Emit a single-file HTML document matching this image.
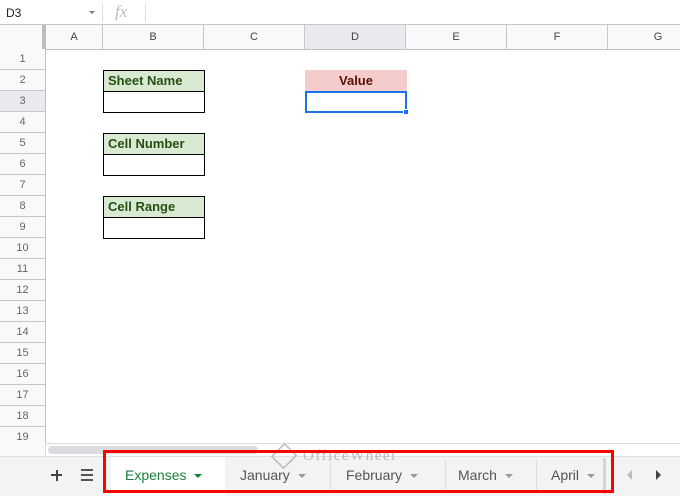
<!DOCTYPE html>
<html><head><style>
*{box-sizing:border-box;margin:0;padding:0}
body{width:680px;height:496px;overflow:hidden;background:#fff;font-family:"Liberation Sans",Arial,sans-serif;position:relative}
.abs{position:absolute}
.fb{left:0;top:0;width:680px;height:25px;border-bottom:1px solid #c7c7c7;background:#fff}
.ch{top:25px;height:25px;background:#f8f9fa;border-bottom:1px solid #c0c0c0;border-right:1px solid #c7c7c7;font-size:11px;color:#444;text-align:center;line-height:24px}
.rh{left:0;width:46px;height:21px;background:#f8f9fa;border-bottom:1px solid #c7c7c7;border-right:1px solid #c0c0c0;font-size:11px;color:#666;text-align:center;line-height:21px}
.cell{border:1px solid #000;font-weight:bold;font-size:13px;padding-left:4px;line-height:19px}
.ar{display:inline-block;width:0;height:0;border-left:4px solid transparent;border-right:4px solid transparent;border-top:4px solid #999;vertical-align:middle;margin-left:8px}
</style></head><body>
<div class="abs fb">
 <div class="abs" style="left:6px;top:6px;font-size:12px;color:#222">D3</div>
 <div class="abs" style="left:89px;top:11px;width:0;height:0;border-left:3px solid transparent;border-right:3px solid transparent;border-top:3px solid #777"></div>
 <div class="abs" style="left:102px;top:3px;width:1px;height:19px;background:#ddd"></div>
 <div class="abs" style="left:115px;top:2px;font-family:'Liberation Serif',serif;font-style:italic;font-size:17px;color:#bbb">fx</div>
 <div class="abs" style="left:145px;top:3px;width:1px;height:19px;background:#ddd"></div>
</div>
<div class="abs ch" style="left:0;width:46px;border-right:4px solid #bdbdbd"></div>
<div class="abs ch" style="left:46px;width:57px">A</div>
<div class="abs ch" style="left:103px;width:101px">B</div>
<div class="abs ch" style="left:204px;width:101px">C</div>
<div class="abs ch" style="left:305px;width:101px;background:#e8eaed">D</div>
<div class="abs ch" style="left:406px;width:101px">E</div>
<div class="abs ch" style="left:507px;width:101px">F</div>
<div class="abs ch" style="left:608px;width:101px">G</div>
<div class="abs rh" style="top:49px">1</div>
<div class="abs rh" style="top:70px">2</div>
<div class="abs rh" style="top:91px;background:#e8eaed">3</div>
<div class="abs rh" style="top:112px">4</div>
<div class="abs rh" style="top:133px">5</div>
<div class="abs rh" style="top:154px">6</div>
<div class="abs rh" style="top:175px">7</div>
<div class="abs rh" style="top:196px">8</div>
<div class="abs rh" style="top:217px">9</div>
<div class="abs rh" style="top:238px">10</div>
<div class="abs rh" style="top:259px">11</div>
<div class="abs rh" style="top:280px">12</div>
<div class="abs rh" style="top:301px">13</div>
<div class="abs rh" style="top:322px">14</div>
<div class="abs rh" style="top:343px">15</div>
<div class="abs rh" style="top:364px">16</div>
<div class="abs rh" style="top:385px">17</div>
<div class="abs rh" style="top:406px">18</div>
<div class="abs rh" style="top:427px">19</div>

<div class="abs cell" style="left:103px;top:70px;width:102px;height:22px;background:#d9ead3;color:#274e13">Sheet Name</div>
<div class="abs cell" style="left:103px;top:91px;width:102px;height:22px"></div>
<div class="abs cell" style="left:103px;top:133px;width:102px;height:22px;background:#d9ead3;color:#274e13">Cell Number</div>
<div class="abs cell" style="left:103px;top:154px;width:102px;height:22px"></div>
<div class="abs cell" style="left:103px;top:196px;width:102px;height:22px;background:#d9ead3;color:#274e13">Cell Range</div>
<div class="abs cell" style="left:103px;top:217px;width:102px;height:22px"></div>
<div class="abs" style="left:305px;top:70px;width:102px;height:21px;background:#f4cccc;color:#5b0f00;font-weight:bold;font-size:13px;text-align:center;line-height:21px">Value</div>
<div class="abs" style="left:305px;top:91px;width:102px;height:22px;border:2px solid #1a73e8"></div>
<div class="abs" style="left:403px;top:109px;width:6px;height:6px;background:#1a73e8;border:1px solid #fff"></div>

<div class="abs" style="left:0;top:443px;width:680px;height:14px;background:#fff;border-top:1px solid #dadce0"></div>
<div class="abs" style="left:0;top:443px;width:46px;height:14px;background:#f8f9fa;border-right:1px solid #ddd"></div>
<div class="abs" style="left:48px;top:446px;width:210px;height:8px;border-radius:4px;background:#dadce0"></div>
<div class="abs" style="left:0;top:456px;width:680px;height:40px;background:#f1f3f4;border-top:1px solid #e0e0e0"></div>
<div class="abs" style="left:51px;top:474px;width:11px;height:2px;background:#444"></div>
<div class="abs" style="left:55.5px;top:469.5px;width:2px;height:11px;background:#444"></div>
<div class="abs" style="left:81px;top:469px;width:12px;height:12px;border-top:2px solid #555;border-bottom:2px solid #555"></div>
<div class="abs" style="left:81px;top:474px;width:12px;height:2px;background:#555"></div>
<div class="abs" style="left:111px;top:457px;width:114px;height:39px;background:#fff;color:#188038;font-size:14px;line-height:37px;padding-left:14px">Expenses<span class="ar" style="border-top-color:#188038"></span></div>
<div class="abs" style="left:240px;top:457px;font-size:14px;line-height:37px;color:#555">January<span class="ar"></span></div>
<div class="abs" style="left:330px;top:460px;width:1px;height:30px;background:#ddd"></div>
<div class="abs" style="left:346px;top:457px;font-size:14px;line-height:37px;color:#555">February<span class="ar"></span></div>
<div class="abs" style="left:445px;top:460px;width:1px;height:30px;background:#ddd"></div>
<div class="abs" style="left:458px;top:457px;font-size:14px;line-height:37px;color:#555">March<span class="ar"></span></div>
<div class="abs" style="left:536px;top:460px;width:1px;height:30px;background:#ddd"></div>
<div class="abs" style="left:551px;top:457px;font-size:14px;line-height:37px;color:#555">April<span class="ar"></span></div>
<div class="abs" style="left:603px;top:458px;width:3px;height:36px;background:#d5d5d5"></div>
<div class="abs" style="left:627px;top:470px;width:0;height:0;border-top:5px solid transparent;border-bottom:5px solid transparent;border-right:5px solid #bbb"></div>
<div class="abs" style="left:656px;top:470px;width:0;height:0;border-top:5px solid transparent;border-bottom:5px solid transparent;border-left:5px solid #444"></div>
<div class="abs" style="left:267px;top:441px;width:144px;height:30px;color:#aaa;font-family:'Liberation Serif',serif;font-size:15px;letter-spacing:1.5px;line-height:30px;padding-left:36px;opacity:.8">OfficeWheel</div>
<div class="abs" style="left:272px;top:443px;width:24px;height:26px;border:2px solid #bbb;transform:rotate(45deg) scale(.75)"></div>
<div class="abs" style="left:103px;top:450px;width:511px;height:43px;border:3px solid #f00"></div>
</body></html>
